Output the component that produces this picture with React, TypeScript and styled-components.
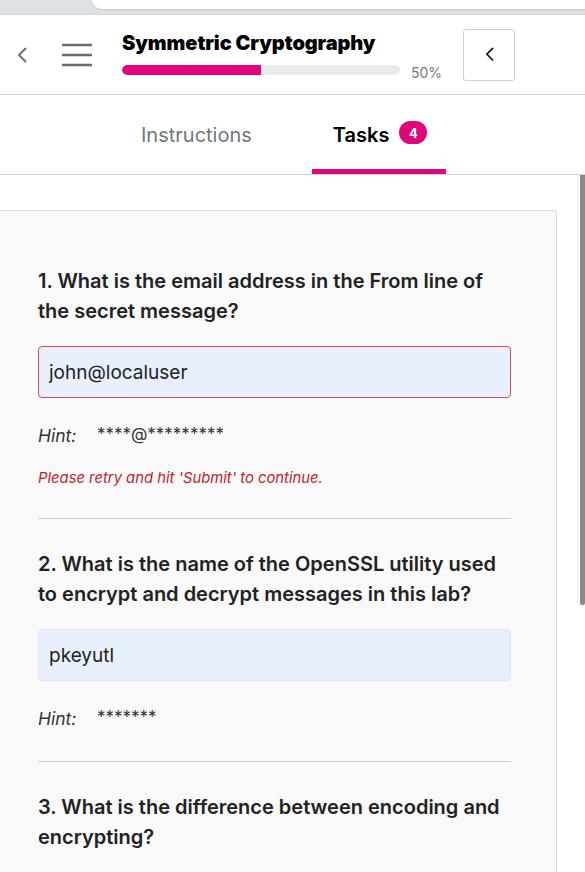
import React from "react";
import styled, { createGlobalStyle } from "styled-components";

const PINK = "#e0067a";

const Global = createGlobalStyle`
  html, body { margin: 0; padding: 0; height: 100%; }
  body { font-family: Inter, "Noto Sans", sans-serif; color: #222; background: #fff; }
  #root { height: 100%; }
  * { box-sizing: border-box; }
`;

const Page = styled.div`
  height: 872px;
  display: flex;
  flex-direction: column;
  overflow: hidden;
`;

const ChromeStrip = styled.div`
  height: 15px;
  flex: none;
  background: #dee1e6;
  border-bottom: 1px solid #d3d6db;
  padding-left: 92px;
`;

const ChromeTab = styled.div`
  height: 9px;
  background: #fff;
  border-bottom-left-radius: 10px;
  box-shadow: 0 1px 1px rgba(0, 0, 0, 0.12);
`;

const Header = styled.header`
  height: 80px;
  flex: none;
  display: flex;
  align-items: center;
  border-bottom: 1px solid #cfcfcf;
  padding-left: 17px;
`;

const IconButton = styled.button<{ $w: number }>`
  width: ${(p) => p.$w}px;
  height: 36px;
  padding: 0;
  border: none;
  background: none;
  display: flex;
  align-items: center;
  justify-content: flex-start;
  cursor: pointer;
  flex: none;
`;

const TitleBlock = styled.div`
  display: flex;
  flex-direction: column;
  gap: 5px;
  margin-left: 29px;
  padding-top: 3px;
`;

const Title = styled.h1`
  margin: 0;
  font-family: Inter, sans-serif;
  font-size: 20px;
  font-weight: 900;
  letter-spacing: -0.1px;
  line-height: 23px;
  color: #000;
`;

const ProgressRow = styled.div`
  display: flex;
  align-items: center;
  gap: 11px;
`;

const Track = styled.div`
  width: 278px;
  height: 10px;
  border-radius: 5px;
  background: #ebebeb;
  overflow: hidden;
`;

const Fill = styled.div`
  height: 100%;
  background: ${PINK};
  border-radius: 5px 0 0 5px;
`;

const Percent = styled.span`
  font-size: 14px;
  color: #777;
  line-height: 16px;
  margin-top: 5px;
`;

const BoxButton = styled.button`
  margin-left: 21px;
  width: 52px;
  height: 52px;
  border: 1px solid #cfcfcf;
  border-radius: 3px;
  background: #fff;
  display: flex;
  align-items: center;
  justify-content: center;
  padding: 0;
  flex: none;
`;

const Tabs = styled.nav`
  height: 80px;
  flex: none;
  display: flex;
  align-items: stretch;
  gap: 39px;
  padding-left: 120px;
  border-bottom: 1px solid #cfcfcf;
`;

const Tab = styled.div<{ $active?: boolean }>`
  display: flex;
  align-items: center;
  gap: 10px;
  padding: 0 21px;
  font-size: 20px;
  font-weight: ${(p) => (p.$active ? 600 : 400)};
  color: ${(p) => (p.$active ? "#000" : "#6f7680")};
  border-bottom: 5px solid ${(p) => (p.$active ? PINK : "transparent")};
  padding-top: 5px;
`;

const Badge = styled.span`
  width: 28px;
  height: 23px;
  border-radius: 12px;
  background: ${PINK};
  color: #fff;
  font-size: 13px;
  font-weight: 700;
  display: flex;
  align-items: center;
  justify-content: center;
  margin-top: -4px;
  margin-right: -2px;
`;

const ScrollArea = styled.div`
  flex: 1;
  position: relative;
  overflow: hidden;
`;

const Scroller = styled.main`
  height: 100%;
  overflow-y: auto;
  padding-top: 35px;
  scrollbar-width: none;
  &::-webkit-scrollbar { display: none; }
`;

const Thumb = styled.div`
  position: absolute;
  top: 0;
  right: 0;
  width: 5px;
  height: 430px;
  background: #8a8a8a;
  border-radius: 0 0 2px 2px;
  box-shadow: -2px 0 0 #fafafa, -3px 0 0 #ececec;
`;

const Card = styled.section`
  margin-left: -8px;
  width: 565px;
  background: #f9f9f9;
  border: 1px solid #dadada;
  border-radius: 4px;
  padding: 25px 45px 40px 45px;
  min-height: 1100px;
`;

const Task = styled.div`
  padding: 30px 0;
  & + & { border-top: 1px solid #cdcdcd; }
`;

const Question = styled.h2`
  margin: 0;
  font-size: 20px;
  font-weight: 600;
  line-height: 30px;
  color: #222;
`;

const Answer = styled.input<{ $error?: boolean }>`
  display: block;
  width: 100%;
  height: 52px;
  margin-top: 20px;
  padding: 0 10px;
  background: #e8f0fe;
  border: 1px solid ${(p) => (p.$error ? "#e4494f" : "#dfe6f2")};
  border-radius: 4px;
  font-family: Inter, sans-serif;
  font-size: 19px;
  color: #222;
  outline: none;
`;

const HintRow = styled.div`
  display: flex;
  align-items: center;
  margin-top: 26px;
  line-height: 24px;
  font-size: 17.5px;
  color: #333;
`;

const HintLabel = styled.em`
  width: 59px;
  font-style: italic;
`;

const HintValue = styled.span`
  font-size: 17px;
  position: relative;
  top: -2px;
`;

const ErrorText = styled.p`
  margin: 20px 0 0;
  font-size: 14.8px;
  line-height: 20px;
  font-style: italic;
  color: #c4222b;
`;

const Chevron = ({ color, size }: { color: string; size: number }) => (
  <svg width={size} height={size * 1.6} viewBox="0 0 10 16" fill="none">
    <path d="M8.5 1.5 L2 8 L8.5 14.5" stroke={color} strokeWidth="1.8" strokeLinecap="round" strokeLinejoin="round" />
  </svg>
);

const Burger = () => (
  <svg width="30" height="24" viewBox="0 0 30 24" fill="none">
    <path d="M1 2 H29 M1 12 H29 M1 22 H29" stroke="#6b6b6b" strokeWidth="2.6" strokeLinecap="round" />
  </svg>
);

const tasks = [
  {
    q: "1. What is the email address in the From line of the secret message?",
    a: "john@localuser",
    hint: "****@*********",
    error: true,
  },
  {
    q: "2. What is the name of the OpenSSL utility used to encrypt and decrypt messages in this lab?",
    a: "pkeyutl",
    hint: "*******",
  },
  {
    q: "3. What is the difference between encoding and encrypting?",
    a: "",
    hint: "",
  },
];

export default function App() {
  const progress = 50;
  return (
    <Page>
      <Global />
      <ChromeStrip>
        <ChromeTab />
      </ChromeStrip>
      <Header>
        <IconButton $w={45} aria-label="Back">
          <Chevron color="#6b6b6b" size={10} />
        </IconButton>
        <IconButton $w={31} aria-label="Menu">
          <Burger />
        </IconButton>
        <TitleBlock>
          <Title>Symmetric Cryptography</Title>
          <ProgressRow>
            <Track>
              <Fill style={{ width: `${progress}%` }} />
            </Track>
            <Percent>{progress}%</Percent>
          </ProgressRow>
        </TitleBlock>
        <BoxButton aria-label="Collapse">
          <Chevron color="#111" size={9} />
        </BoxButton>
      </Header>
      <Tabs>
        <Tab>Instructions</Tab>
        <Tab $active>
          Tasks <Badge>4</Badge>
        </Tab>
      </Tabs>
      <ScrollArea>
        <Scroller>
          <Card>
            {tasks.map((t) => (
              <Task key={t.q}>
                <Question>{t.q}</Question>
                <Answer $error={t.error} defaultValue={t.a} />
                {t.hint && (
                  <HintRow>
                    <HintLabel>Hint:</HintLabel>
                    <HintValue>{t.hint}</HintValue>
                  </HintRow>
                )}
                {t.error && <ErrorText>Please retry and hit 'Submit' to continue.</ErrorText>}
              </Task>
            ))}
          </Card>
        </Scroller>
        <Thumb />
      </ScrollArea>
    </Page>
  );
}
